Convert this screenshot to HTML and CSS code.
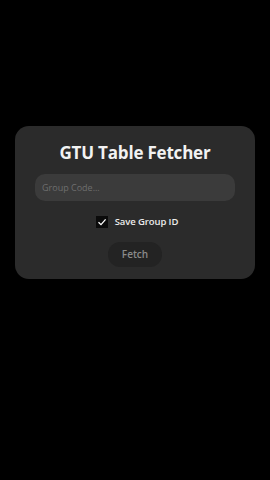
FILE: index.html
```html
<!DOCTYPE html>
<html>
<head>
<meta charset="utf-8">
<link rel="stylesheet" href="styles.css">
</head>
<body>
<div class="screen">
  <div class="card">
    <h1 class="title">GTU Table Fetcher</h1>
    <div class="input">Group Code...</div>
    <label class="check-row">
      <span class="box"><svg width="10" height="10" viewBox="0 0 10 10"><path d="M1.5 5.2 L4 7.6 L8.6 2.4" fill="none" stroke="#fff" stroke-width="1.3"/></svg></span>
      <span class="check-label">Save Group ID</span>
    </label>
    <div class="btn">Fetch</div>
  </div>
</div>
</body>
</html>
```
FILE: styles.css
```css
html, body { margin: 0; padding: 0; background: #000; }
body { width: 270px; height: 480px; font-family: "Open Sans", "Noto Sans", sans-serif; }
.screen { height: 480px; display: flex; align-items: flex-start; justify-content: center; padding-top: 126px; box-sizing: border-box; }
.card { width: 240px; height: 153px; background: #2b2b2b; border-radius: 14px; box-sizing: border-box; padding: 14px 20px 0; display: flex; flex-direction: column; align-items: center; }
.title { margin: 0; font-size: 17px; font-weight: 700; color: #f2f2f2; line-height: 26px; letter-spacing: -0.2px; }
.input { margin-top: 8px; width: 200px; height: 27px; background: #3b3b3b; border-radius: 10px; box-sizing: border-box; padding-left: 7px; font-size: 9px; color: #6e6e6e; line-height: 27px; }
.check-row { margin-top: 14px; display: flex; align-items: center; gap: 7px; margin-left: 4px; }
.box { width: 12px; height: 12px; background: #0b0b0b; display: flex; align-items: center; justify-content: center; }
.check-label { font-size: 9.5px; font-weight: 600; color: #ececec; letter-spacing: -0.1px; }
.btn { margin-top: 14px; width: 54px; height: 25px; border-radius: 12px; background: #232323; color: #8a8a8a; font-size: 10px; font-weight: 600; text-align: center; line-height: 25px; }
```
